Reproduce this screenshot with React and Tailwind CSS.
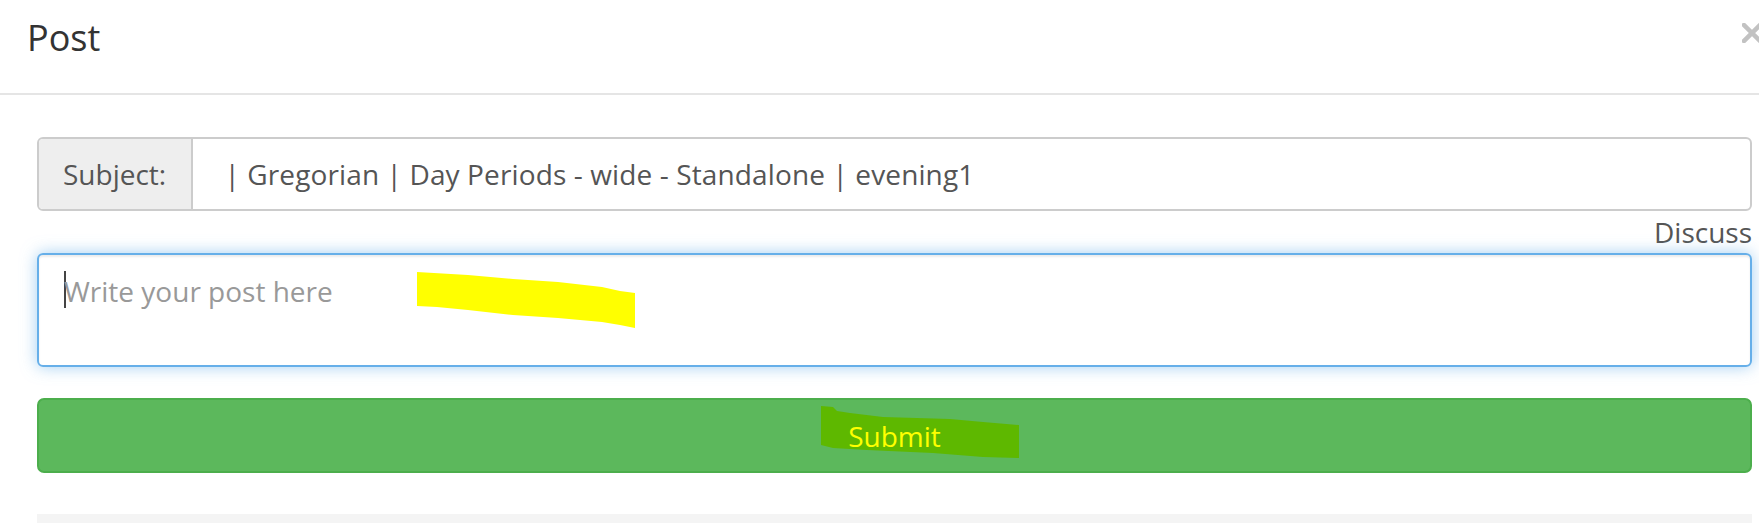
export default function App() {
  return (
    <div className="relative w-[1759px] h-[523px] overflow-hidden bg-white font-['Open_Sans','Liberation_Sans',sans-serif]">
      <div className="h-[95px] border-b-2 border-[#e5e5e5] flex justify-between items-start pl-[27px] pt-[20px]">
        <h4 className="text-[36px] leading-[36px] text-[#333]">Post</h4>
        <svg className="mt-[3px] -mr-[3px]" width="20" height="20" viewBox="0 0 20 20">
          <path d="M2 2 L18 18 M18 2 L2 18" stroke="#c2c2c2" strokeWidth="4.5" strokeLinecap="square" />
        </svg>
      </div>
      <div className="pl-[37px] pr-[7px] pt-[42px]">
        <div className="flex h-[74px] border-2 border-[#ccc] rounded-[6px] overflow-hidden text-[28px] text-[#555]">
          <div className="w-[154px] shrink-0 bg-[#eee] border-r-2 border-[#ccc] pl-[24px] flex items-center">Subject:</div>
          <div className="flex-1 flex items-center pl-[24px] whitespace-pre tracking-[0.12px]">{" | Gregorian | Day Periods - wide - Standalone | evening1"}</div>
        </div>
        <div className="h-[42px] leading-[42px] text-right text-[28px] text-[#555]">Discuss</div>
        <div className="relative h-[114px] border-2 border-[#66afe9] rounded-[6px] shadow-[inset_0_2px_2px_rgba(0,0,0,0.075),0_0_16px_rgba(102,175,233,0.6)] pl-[25px] pt-[16px] text-[28px] leading-[40px] text-[#999]">
          <span className="inline-block align-top w-[2px] h-[37px] bg-[#444] -mr-[2px]" />
          <span>Write your post here</span>
          <svg className="absolute left-0 top-0" width="700" height="100" viewBox="0 0 700 100">
            <polygon
              fill="#ffff00"
              points="378,17 429,20 474,24 519,27 563,32 581,36 596,38 596,73 581,70 563,67 519,63 474,60 429,55 398,52 378,51"
            />
          </svg>
        </div>
        <button className="relative mt-[31px] h-[75px] w-full border-2 border-[#4cae4c] bg-[#5cb85c] rounded-[7px] text-[28px] text-[#ffff00] flex items-center justify-center">
          <svg className="absolute left-0 top-0" width="1000" height="75" viewBox="0 0 1000 75">
            <polygon
              fill="#5eb800"
              points="782,6 794,7 798,11 811,13 844,17 878,18 911,19 944,22 980,25 980,58 944,57 894,53 828,50 794,48 782,45"
            />
          </svg>
          <span className="relative">Submit</span>
        </button>
        <div className="mt-[41px] h-[20px] bg-[#f4f4f4]" />
      </div>
    </div>
  );
}
